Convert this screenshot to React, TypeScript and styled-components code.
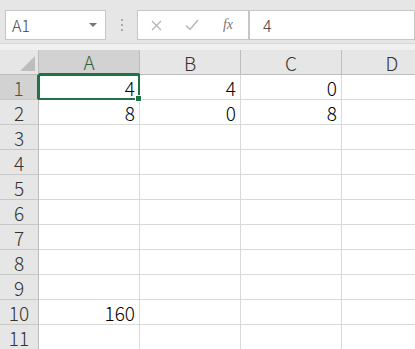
import React from "react"
import styled, { createGlobalStyle } from "styled-components"

const GlobalStyle = createGlobalStyle`
  html, body {
    margin: 0;
    padding: 0;
    background: #ffffff;
    overflow: hidden;
  }
  body {
    font-family: "Noto Sans CJK JP", "Noto Sans", sans-serif;
  }
`

const ROW_H = 25
const HEAD_W = 39
const COL_W = 101

const Window = styled.div`
  width: 415px;
  height: 349px;
  display: flex;
  flex-direction: column;
  overflow: hidden;
  background: #ffffff;
`

const Toolbar = styled.div`
  height: 44px;
  flex: none;
  display: flex;
  align-items: flex-start;
  padding-top: 10px;
  box-sizing: border-box;
  background: #e6e6e6;
  border-bottom: 1px solid #d6d6d6;
`

const NameBox = styled.div`
  margin-left: 5px;
  width: 101px;
  height: 30px;
  box-sizing: border-box;
  background: #fff;
  border: 1px solid #c6c6c6;
  display: flex;
  align-items: center;
  padding: 0 8px 0 6px;
  font-size: 16px;
  font-weight: 300;
  color: #444;
  justify-content: space-between;
`

const Caret = styled.span`
  width: 0;
  height: 0;
  border-left: 4px solid transparent;
  border-right: 4px solid transparent;
  border-top: 4px solid #777;
`

const Grip = styled.div`
  width: 31px;
  height: 30px;
  display: flex;
  flex-direction: column;
  align-items: center;
  justify-content: center;
  gap: 3px;
`

const Dot = styled.span`
  width: 2px;
  height: 2px;
  background: #aaa;
`

const FxBox = styled.div`
  width: 111px;
  height: 30px;
  box-sizing: border-box;
  background: #fff;
  border: 1px solid #c6c6c6;
  border-right: none;
  display: flex;
  align-items: center;
`

const FxButton = styled.div<{ $w: number }>`
  width: ${(p) => p.$w}px;
  display: flex;
  justify-content: center;
  align-items: center;
  color: #b4b4b4;
`

const FxLabel = styled.span`
  font-family: "Liberation Serif", serif;
  font-style: italic;
  font-size: 14px;
  color: #777;
`

const Divider = styled.div`
  width: 2px;
  height: 30px;
  border-left: 1px solid #c6c6c6;
  border-right: 1px solid #c6c6c6;
  box-sizing: border-box;
  background: #e6e6e6;
`

const FormulaInput = styled.div`
  flex: 1;
  height: 30px;
  box-sizing: border-box;
  background: #fff;
  border: 1px solid #c6c6c6;
  border-left: none;
  display: flex;
  align-items: center;
  padding-left: 13px;
  font-size: 16px;
  font-weight: 300;
  color: #333;
`

const Gap = styled.div`
  height: 6px;
  flex: none;
  background: #f0f0f0;
`

const Grid = styled.div`
  display: grid;
  grid-template-columns: ${HEAD_W}px repeat(3, ${COL_W}px) ${COL_W}px;
  grid-auto-rows: ${ROW_H}px;
`

const Corner = styled.div`
  background: #e6e6e6;
  border-right: 1px solid #bdbdbd;
  border-bottom: 1px solid #bdbdbd;
  box-sizing: border-box;
  position: relative;
  &::after {
    content: "";
    position: absolute;
    right: 3px;
    bottom: 3px;
    width: 0;
    height: 0;
    border-left: 15px solid transparent;
    border-bottom: 15px solid #bdbdbd;
  }
`

const ColHead = styled.div<{ $active?: boolean }>`
  background: ${(p) => (p.$active ? "#d2d2d2" : "#e6e6e6")};
  color: ${(p) => (p.$active ? "#2e5e3e" : "#333")};
  border-right: 1px solid #bdbdbd;
  border-bottom: ${(p) => (p.$active ? "2px solid #217346" : "1px solid #bdbdbd")};
  box-sizing: border-box;
  display: flex;
  align-items: center;
  justify-content: center;
  font-size: 19px;
  font-weight: 300;
`

const RowHead = styled.div<{ $active?: boolean }>`
  background: ${(p) => (p.$active ? "#d2d2d2" : "#e6e6e6")};
  color: ${(p) => (p.$active ? "#3d5a46" : "#333")};
  border-right: ${(p) => (p.$active ? "2px solid #217346" : "1px solid #bdbdbd")};
  border-bottom: 1px solid #c8c8c8;
  box-sizing: border-box;
  display: flex;
  align-items: center;
  justify-content: center;
  font-size: 19px;
  font-weight: 300;
`

const Cell = styled.div<{ $selected?: boolean }>`
  border-right: 1px solid #d9d9d9;
  border-bottom: 1px solid #d9d9d9;
  box-sizing: border-box;
  display: flex;
  align-items: center;
  justify-content: flex-end;
  padding-right: 4px;
  font-size: 19px;
  font-weight: 300;
  color: #000;
  position: relative;
  ${(p) =>
    p.$selected &&
    `
    &::after {
      content: "";
      position: absolute;
      left: -1px;
      top: -1px;
      right: -1px;
      bottom: -1px;
      border: 2px solid #217346;
      pointer-events: none;
    }
    &::before {
      content: "";
      position: absolute;
      right: -3px;
      bottom: -3px;
      width: 5px;
      height: 5px;
      background: #217346;
      border: 1px solid #fff;
      z-index: 2;
    }
  `}
`

const data: Record<number, (string | number)[]> = {
  1: [4, 4, 0],
  2: [8, 0, 8],
  10: [160, "", ""],
}

const cols = ["A", "B", "C", "D"]
const rows = Array.from({ length: 11 }, (_, i) => i + 1)

const App: React.FC = () => {
  return (
    <>
      <GlobalStyle />
      <Window>
        <Toolbar>
          <NameBox>
            <span>A1</span>
            <Caret />
          </NameBox>
          <Grip>
            <Dot />
            <Dot />
            <Dot />
          </Grip>
          <FxBox>
            <FxButton $w={36}>
              <svg width="11" height="11" viewBox="0 0 11 11">
                <path d="M1 1 L10 10 M10 1 L1 10" stroke="#b4b4b4" strokeWidth="1.3" fill="none" />
              </svg>
            </FxButton>
            <FxButton $w={36}>
              <svg width="14" height="12" viewBox="0 0 14 12">
                <path d="M1 6.5 L5 10.5 L13 1" stroke="#b4b4b4" strokeWidth="1.4" fill="none" />
              </svg>
            </FxButton>
            <FxButton $w={36}>
              <FxLabel>fx</FxLabel>
            </FxButton>
          </FxBox>
          <Divider />
          <FormulaInput>4</FormulaInput>
        </Toolbar>
        <Gap />
        <Grid>
          <Corner />
          {cols.map((c) => (
            <ColHead key={c} $active={c === "A"}>
              {c}
            </ColHead>
          ))}
          {rows.map((r) => (
            <React.Fragment key={r}>
              <RowHead $active={r === 1}>{r}</RowHead>
              {cols.map((c, ci) => (
                <Cell key={c} $selected={r === 1 && ci === 0}>
                  {data[r]?.[ci] ?? ""}
                </Cell>
              ))}
            </React.Fragment>
          ))}
        </Grid>
      </Window>
    </>
  )
}

export default App
